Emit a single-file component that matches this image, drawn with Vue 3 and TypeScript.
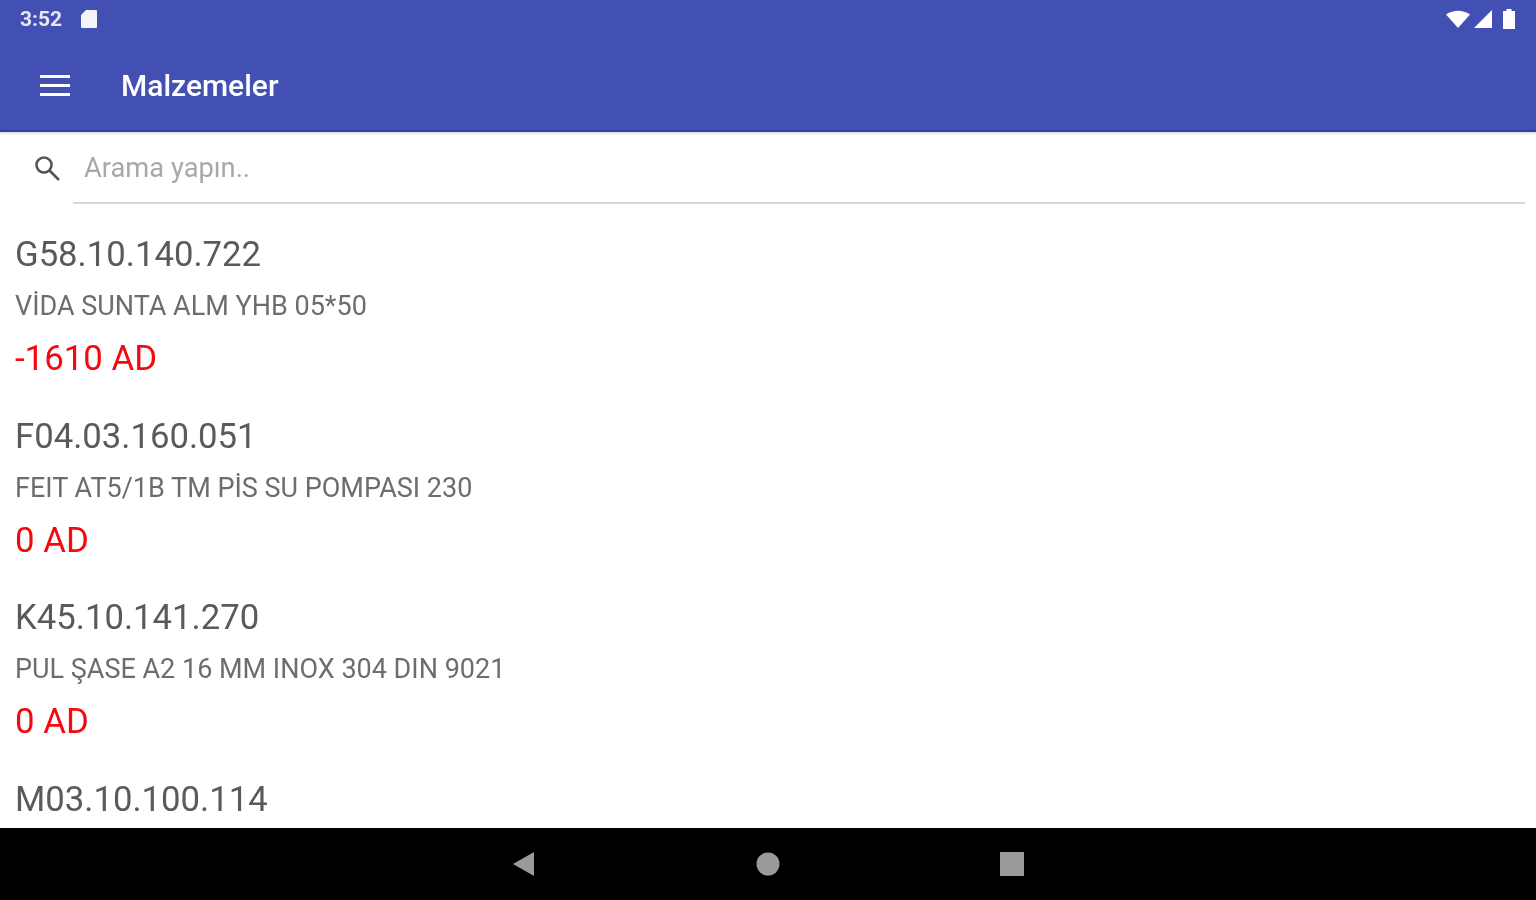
<template>
  <div class="screen">
    <header class="appbar">
      <div class="status soft">
        <div class="status-left">
          <span class="clock">3:52</span>
          <svg width="18" height="20" viewBox="0 0 18 20"><path d="M6 1h10a1 1 0 0 1 1 1v16a1 1 0 0 1-1 1H2a1 1 0 0 1-1-1V6z" fill="#f4f5fb" /></svg>
        </div>
        <div class="status-right">
          <svg width="24" height="18" viewBox="0 0 24 18"><path d="M0 4.500Q12-3 24 4.500L12 18z" fill="#fff" /></svg>
          <svg class="signal" width="18" height="18" viewBox="0 0 18 18"><path d="M18 0v18H0z" fill="#fff" /></svg>
          <svg class="battery" width="12" height="20" viewBox="0 0 12 20"><path d="M3.500 0h5v2H12v18H0V2h3.500z" fill="#fff" /></svg>
        </div>
      </div>
      <div class="toolbar soft">
        <svg class="menu" width="30" height="21" viewBox="0 0 30 21"><path d="M0 1.500h30M0 10.500h30M0 19.500h30" stroke="#fff" stroke-width="3" /></svg>
        <span class="title">Malzemeler</span>
      </div>
    </header>

    <div class="search soft">
      <svg class="search-icon" width="28" height="28" viewBox="0 0 28 28" fill="none" stroke="#555" stroke-width="2.600"><circle cx="11" cy="11" r="7.500" /><path d="M16.500 16.500L26 26" /></svg>
      <div class="search-field">Arama yapın..</div>
    </div>

    <main class="list soft">
      <div v-for="item in items" :key="item.code" class="item">
        <div class="code">{{ item.code }}</div>
        <div class="name">{{ item.name }}</div>
        <div class="qty">{{ item.qty }}</div>
      </div>
    </main>

    <nav class="navbar">
      <svg class="soft" width="24" height="26" viewBox="0 0 24 26"><path d="M22 1v24L1 13z" fill="#9a9a9a" /></svg>
      <svg class="soft" width="24" height="26" viewBox="0 0 24 26"><circle cx="12" cy="13" r="11.500" fill="#9a9a9a" /></svg>
      <svg class="soft" width="24" height="26" viewBox="0 0 24 26"><rect y="1" width="24" height="24" fill="#9a9a9a" /></svg>
    </nav>
  </div>
</template>

<script setup lang="ts">
interface Material {
  code: string
  name: string
  qty: string
}

const items: Material[] = [
  { code: 'G58.10.140.722', name: 'VİDA SUNTA ALM YHB 05*50', qty: '-1610 AD' },
  { code: 'F04.03.160.051', name: 'FEIT AT5/1B TM PİS SU POMPASI 230', qty: '0 AD' },
  { code: 'K45.10.141.270', name: 'PUL ŞASE A2 16 MM INOX 304 DIN 9021', qty: '0 AD' },
  { code: 'M03.10.100.114', name: '', qty: '' }
]
</script>

<style>
html,
body {
  margin: 0;
  background: #fff;
}
</style>

<style scoped>
.screen {
  display: flex;
  flex-direction: column;
  height: 900px;
  overflow: hidden;
  font-family: Roboto, "Liberation Sans", sans-serif;
  background: #fff;
}
/* the reference is an upscaled capture, everything in it is a little soft */
.soft {
  filter: blur(0.7px);
}
.appbar {
  flex: none;
  height: 132px;
  background: #4250b4;
  border-bottom: 2px solid #2f41ab;
  box-shadow: 0 1px 3px rgba(0, 0, 0, 0.2);
  box-sizing: border-box;
  color: #fff;
}
.status {
  display: flex;
  align-items: center;
  justify-content: space-between;
  height: 37px;
  padding: 0 21px 0 20px;
}
.status-left,
.status-right {
  display: flex;
  align-items: center;
}
.status-left {
  gap: 18px;
}
.signal {
  margin-left: 4px;
}
.battery {
  margin-left: 11px;
}
.clock {
  font-size: 21px;
  font-weight: 700;
  color: #e6e8f5;
}
.toolbar {
  display: flex;
  align-items: center;
  height: 96px;
  padding-left: 40px;
}
.menu {
  margin-right: 51px;
}
.title {
  font-size: 30px;
  font-weight: 500;
}
.search {
  flex: none;
  display: flex;
  height: 72px;
  padding-left: 33px;
  padding-right: 11px;
}
.search-icon {
  margin-top: 22px;
  margin-right: 12px;
}
.search-field {
  flex: 1;
  padding-left: 11px;
  border-bottom: 2px solid #d6d6d6;
  font-size: 27.300px;
  line-height: 72px;
  color: #a8a8a8;
}
.list {
  flex: 1;
  min-height: 0;
  overflow: hidden;
  padding: 29px 15px 0;
}
.item {
  height: 181.500px;
}
.code {
  height: 43px;
  font-size: 34.700px;
  line-height: 43px;
  color: #5a5a5a;
}
.name {
  height: 61px;
  font-size: 27px;
  line-height: 61px;
  color: #6d6d6d;
}
.qty {
  height: 43px;
  font-size: 34.800px;
  line-height: 43px;
  color: #f5090f;
}
.navbar {
  flex: none;
  display: flex;
  align-items: center;
  justify-content: center;
  gap: 220px;
  height: 72px;
  background: #000;
}
</style>
